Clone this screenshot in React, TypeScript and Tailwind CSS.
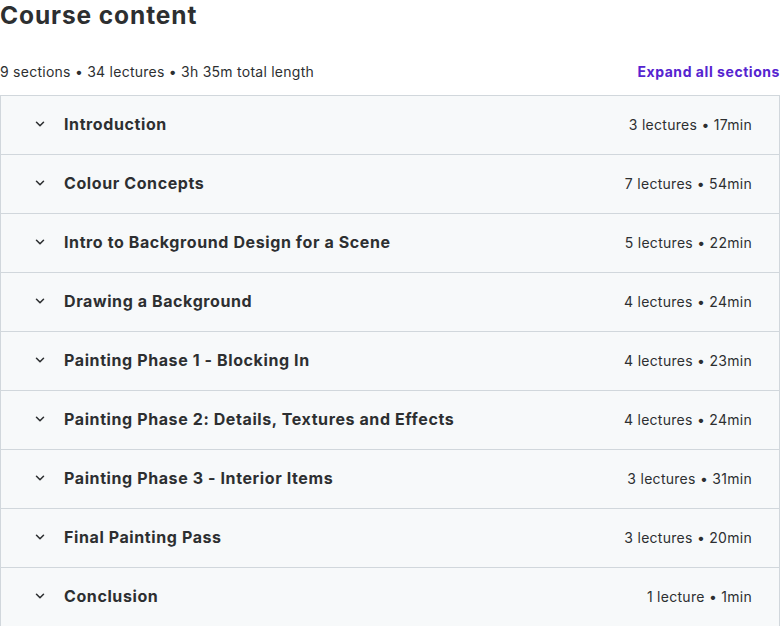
import { ChevronDown } from "lucide-react";

const sections = [
  { title: "Introduction", meta: "3 lectures • 17min" },
  { title: "Colour Concepts", meta: "7 lectures • 54min" },
  { title: "Intro to Background Design for a Scene", meta: "5 lectures • 22min" },
  { title: "Drawing a Background", meta: "4 lectures • 24min" },
  { title: "Painting Phase 1 - Blocking In", meta: "4 lectures • 23min" },
  { title: "Painting Phase 2: Details, Textures and Effects", meta: "4 lectures • 24min" },
  { title: "Painting Phase 3 - Interior Items", meta: "3 lectures • 31min" },
  { title: "Final Painting Pass", meta: "3 lectures • 20min" },
  { title: "Conclusion", meta: "1 lecture • 1min" },
];

export default function App() {
  return (
    <div className="w-[780px] bg-white text-[#2d2f31]" style={{ fontFamily: "Inter, 'Noto Sans', sans-serif" }}>
      <h2 className="text-[24.5px] font-bold leading-[31px] tracking-[0.9px]">Course content</h2>
      <div className="mt-[25px] flex items-center justify-between h-[31px]">
        <span className="text-[14px] tracking-[0.25px] text-[#2d2f31]">9 sections • 34 lectures • 3h 35m total length</span>
        <button className="text-[14px] font-bold tracking-[0.55px] text-[#5624d0]">Expand all sections</button>
      </div>
      <div className="mt-[8px] border-x border-b border-[#d1d7dc]">
        {sections.map((s, i) => (
          <div
            key={i}
            className="flex items-center h-[59px] bg-[#f7f9fa] pl-[32px] pr-[27px] pb-[2px] border-t border-[#d1d7dc]"
          >
            <ChevronDown className="w-[14px] h-[14px] text-[#2d2f31]" strokeWidth={2.6} />
            <span className="ml-[17px] text-[16px] font-bold tracking-[0.6px] flex-1">{s.title}</span>
            <span className="text-[14px] tracking-[0.28px] text-[#2d2f31]">{s.meta}</span>
          </div>
        ))}
      </div>
    </div>
  );
}
